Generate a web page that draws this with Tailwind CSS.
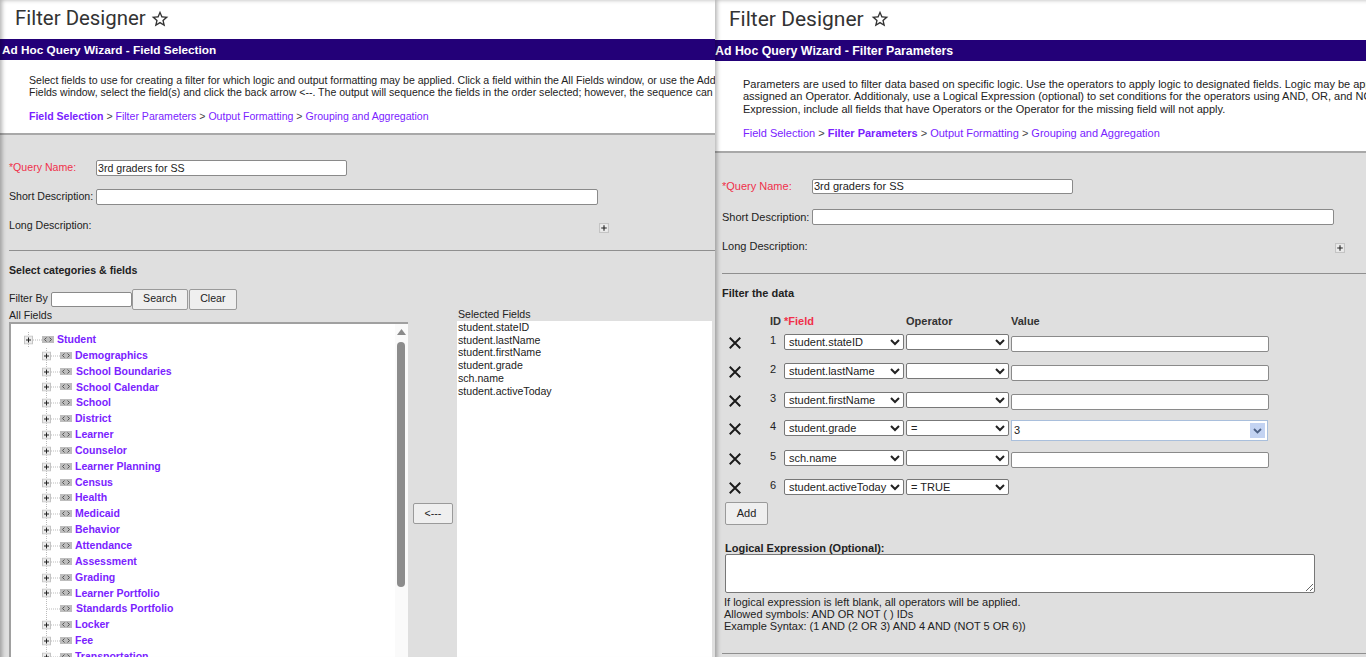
<!DOCTYPE html>
<html>
<head>
<meta charset="utf-8">
<script src="https://cdn.jsdelivr.net/npm/@tailwindcss/browser@4"></script>
</head>
<body class="overflow-hidden bg-white">
<svg width="0" height="0" class="absolute">
  <symbol id="plus" viewBox="0 0 9 9"><rect x=".5" y=".5" width="8" height="8" fill="#ececec" stroke="#c4c4c4"/><path d="M2 4.5h5M4.5 2v5" stroke="#222" stroke-width="1"/></symbol>
  <symbol id="tag" viewBox="0 0 12 7"><rect width="12" height="7" fill="#bdbdbd"/><path d="M4.5 1.5 2.5 3.5 4.5 5.5M7.5 1.5 9.5 3.5 7.5 5.5" fill="none" stroke="#555" stroke-width="1"/></symbol>
  <symbol id="node" viewBox="0 0 32 16"><path d="M4.5 0V16M9 8H18" stroke="#bbb" stroke-dasharray="1 1" fill="none"/><use href="#plus" x="0" y="3.5" width="9" height="9"/><use href="#tag" x="18" y="4" width="12" height="7"/></symbol>
  <symbol id="leaf" viewBox="0 0 32 16"><path d="M4.5 0V16M5 8H18" stroke="#bbb" stroke-dasharray="1 1" fill="none"/><use href="#tag" x="18" y="4" width="12" height="7"/></symbol>
  <symbol id="x" viewBox="0 0 16 16"><path d="M2 2 14 14M14 2 2 14" stroke="#1a1a1a" stroke-width="2.2" fill="none"/></symbol>
</svg>
<div class="flex h-[657px] w-[1366px] overflow-hidden font-['Liberation_Sans',Arial,sans-serif] text-[#222]">

  <!-- LEFT -->
  <section class="relative w-[715px] h-full shrink-0 overflow-hidden flex flex-col">
    <header class="h-[39px] shrink-0 flex items-center pl-[15px] pb-[2px] gap-[4px] bg-white">
      <h1 class="font-['Roboto',sans-serif] text-[20.4px] font-normal text-[#333] leading-none">Filter Designer</h1>
      <svg class="w-[20px] h-[20px]" viewBox="0 0 24 24" fill="#333"><path d="M22 9.24l-7.19-.62L12 2 9.19 8.63 2 9.24l5.46 4.73L5.82 21 12 17.27 18.18 21l-1.63-7.03L22 9.24zM12 15.4l-3.76 2.27 1-4.28-3.32-2.88 4.38-.38L12 6.1l1.71 4.04 4.38.38-3.32 2.88 1 4.28L12 15.4z"/></svg>
    </header>
    <div class="h-[21px] shrink-0 bg-[#230078] text-white font-bold text-[11.8px] leading-[22px] pl-[2px] whitespace-nowrap">Ad Hoc Query Wizard - Field Selection</div>
    <div class="h-[75px] shrink-0 bg-white border-b-2 border-[#a8a8a8] pl-[29px] pt-[14px] text-[10.55px] leading-[12px] whitespace-nowrap">
      <p>Select fields to use for creating a filter for which logic and output formatting may be applied. Click a field within the All Fields window, or use the Add</p>
      <p>Fields window, select the field(s) and click the back arrow &lt;--. The output will sequence the fields in the order selected; however, the sequence can</p>
      <p class="mt-[12px] text-[#7a22ff]"><b>Field Selection</b> <span class="text-[#444]">&gt;</span> Filter Parameters <span class="text-[#444]">&gt;</span> Output Formatting <span class="text-[#444]">&gt;</span> Grouping and Aggregation</p>
    </div>
    <div class="flex-1 bg-[#dfdfdf] text-[10.6px] min-h-0">
      <div class="flex items-center h-[16px] mt-[25px] pl-[9px]"><label class="w-[87px] text-[#f0304a]">*Query Name:</label><input value="3rd graders for SS" class="w-[251px] h-[16px] bg-white border border-[#8a8a8a] rounded-[2px] px-[1px] text-[10.6px]"></div>
      <div class="flex items-center h-[16px] mt-[13px] pl-[9px]"><label class="w-[87px]">Short Description:</label><input class="w-[502px] h-[16px] bg-white border border-[#8a8a8a] rounded-[2px]"></div>
      <div class="flex items-center h-[12px] mt-[15px] pl-[9px]"><label class="w-[590px]">Long Description:</label><svg class="w-[10px] h-[10px] mt-[4px]"><use href="#plus"/></svg></div>
      <div class="mt-[18px] ml-[9px] border-t border-[#8f8f8f]"></div>
      <div class="mt-[13px] pl-[9px] font-bold leading-[12px]">Select categories &amp; fields</div>
      <div class="flex items-center mt-[13px] pl-[9px] h-[20px]">
        <span>Filter By</span>
        <input class="ml-[3px] w-[81px] h-[15px] bg-white border border-[#8a8a8a] rounded-[2px]">
        <button class="w-[56px] h-[21px] bg-[#efefef] border border-[#9a9a9a] rounded-[2px] text-[10.6px]">Search</button>
        <button class="ml-[1px] w-[48px] h-[21px] bg-[#efefef] border border-[#9a9a9a] rounded-[2px] text-[10.6px]">Clear</button>
      </div>
      <div class="flex">
        <div class="w-[448px] ml-[9px] shrink-0">
          <div class="h-[13px] leading-[13px]">All Fields</div>
          <div class="relative w-[399px] h-[400px] bg-white border-l-2 border-t-2 border-[#a0a0a0] pt-[8px] pl-[13px] text-[10.5px] font-bold text-[#7a22ff]">
            <div class="flex items-center h-[15.85px]"><svg class="w-[32px] h-[16px] shrink-0"><use href="#node"/></svg><span class="ml-[1px]">Student</span></div>
            <div class="ml-[18px]">
              <div class="flex items-center h-[15.85px]"><svg class="w-[32px] h-[16px] shrink-0"><use href="#node"/></svg><span class="ml-[1px]">Demographics</span></div>
              <div class="flex items-center h-[15.85px]"><svg class="w-[32px] h-[16px] shrink-0"><use href="#node"/></svg><span class="ml-[2px]">School Boundaries</span></div>
              <div class="flex items-center h-[15.85px]"><svg class="w-[32px] h-[16px] shrink-0"><use href="#node"/></svg><span class="ml-[2px]">School Calendar</span></div>
              <div class="flex items-center h-[15.85px]"><svg class="w-[32px] h-[16px] shrink-0"><use href="#node"/></svg><span class="ml-[2px]">School</span></div>
              <div class="flex items-center h-[15.85px]"><svg class="w-[32px] h-[16px] shrink-0"><use href="#node"/></svg><span class="ml-[1px]">District</span></div>
              <div class="flex items-center h-[15.85px]"><svg class="w-[32px] h-[16px] shrink-0"><use href="#node"/></svg><span class="ml-[1px]">Learner</span></div>
              <div class="flex items-center h-[15.85px]"><svg class="w-[32px] h-[16px] shrink-0"><use href="#node"/></svg><span class="ml-[1px]">Counselor</span></div>
              <div class="flex items-center h-[15.85px]"><svg class="w-[32px] h-[16px] shrink-0"><use href="#node"/></svg><span class="ml-[1px]">Learner Planning</span></div>
              <div class="flex items-center h-[15.85px]"><svg class="w-[32px] h-[16px] shrink-0"><use href="#node"/></svg><span class="ml-[1px]">Census</span></div>
              <div class="flex items-center h-[15.85px]"><svg class="w-[32px] h-[16px] shrink-0"><use href="#node"/></svg><span class="ml-[1px]">Health</span></div>
              <div class="flex items-center h-[15.85px]"><svg class="w-[32px] h-[16px] shrink-0"><use href="#node"/></svg><span class="ml-[1px]">Medicaid</span></div>
              <div class="flex items-center h-[15.85px]"><svg class="w-[32px] h-[16px] shrink-0"><use href="#node"/></svg><span class="ml-[1px]">Behavior</span></div>
              <div class="flex items-center h-[15.85px]"><svg class="w-[32px] h-[16px] shrink-0"><use href="#node"/></svg><span class="ml-[1px]">Attendance</span></div>
              <div class="flex items-center h-[15.85px]"><svg class="w-[32px] h-[16px] shrink-0"><use href="#node"/></svg><span class="ml-[1px]">Assessment</span></div>
              <div class="flex items-center h-[15.85px]"><svg class="w-[32px] h-[16px] shrink-0"><use href="#node"/></svg><span class="ml-[1px]">Grading</span></div>
              <div class="flex items-center h-[15.85px]"><svg class="w-[32px] h-[16px] shrink-0"><use href="#node"/></svg><span class="ml-[1px]">Learner Portfolio</span></div>
              <div class="flex items-center h-[15.85px]"><svg class="w-[32px] h-[16px] shrink-0"><use href="#leaf"/></svg><span class="ml-[2px]">Standards Portfolio</span></div>
              <div class="flex items-center h-[15.85px]"><svg class="w-[32px] h-[16px] shrink-0"><use href="#node"/></svg><span class="ml-[1px]">Locker</span></div>
              <div class="flex items-center h-[15.85px]"><svg class="w-[32px] h-[16px] shrink-0"><use href="#node"/></svg><span class="ml-[1px]">Fee</span></div>
              <div class="flex items-center h-[15.85px]"><svg class="w-[32px] h-[16px] shrink-0"><use href="#node"/></svg><span class="ml-[1px]">Transportation</span></div>
            </div>
            <div class="absolute right-0 top-0 bottom-0 w-[13px] bg-[#fafafa]">
              <svg class="absolute left-[2px] top-[5px] w-[9px] h-[6px]" viewBox="0 0 9 6" fill="#8a8a8a"><path d="M4.5 0 9 6H0z"/></svg>
              <div class="absolute left-[2px] top-[18px] w-[8px] h-[245px] rounded-[4px] bg-[#8c8c8c]"></div>
            </div>
          </div>
        </div>
        <div class="w-[255px] shrink-0 relative">
          <div class="h-[13px] leading-[13px] -mt-[1px] pl-[1px]">Selected Fields</div>
          <div class="h-[400px] mt-[1px] bg-white leading-[12.7px] pl-[1px]">
            <p class="-mt-[1px]">student.stateID</p><p>student.lastName</p><p>student.firstName</p><p>student.grade</p><p>sch.name</p><p>student.activeToday</p>
          </div>
          <button class="absolute left-[-44px] top-[194px] w-[40px] h-[21px] bg-[#efefef] border border-[#9a9a9a] rounded-[2px] text-[10.6px]">&lt;---</button>
        </div>
      </div>
    </div>
    <div class="pointer-events-none absolute inset-0 shadow-[inset_4px_2px_4px_-2px_rgba(0,0,0,0.3)]"></div>
  </section>

  <!-- RIGHT -->
  <section class="relative w-[651px] h-full shrink-0 overflow-hidden flex flex-col">
    <header class="h-[40px] shrink-0 flex items-center pl-[14px] pb-[2px] gap-[6px] bg-white">
      <h1 class="font-['Roboto',sans-serif] text-[21px] font-normal text-[#333] leading-none">Filter Designer</h1>
      <svg class="w-[20px] h-[20px]" viewBox="0 0 24 24" fill="#333"><path d="M22 9.24l-7.19-.62L12 2 9.19 8.63 2 9.24l5.46 4.73L5.82 21 12 17.27 18.18 21l-1.63-7.03L22 9.24zM12 15.4l-3.76 2.27 1-4.28-3.32-2.88 4.38-.38L12 6.1l1.71 4.04 4.38.38-3.32 2.88 1 4.28L12 15.4z"/></svg>
    </header>
    <div class="h-[21px] shrink-0 bg-[#230078] text-white font-bold text-[12.37px] leading-[23px] whitespace-nowrap">Ad Hoc Query Wizard - Filter Parameters</div>
    <div class="h-[92px] shrink-0 bg-white border-b-2 border-[#a8a8a8] pl-[28px] pt-[17px] text-[11px] leading-[12.3px] whitespace-nowrap">
      <p>Parameters are used to filter data based on specific logic. Use the operators to apply logic to designated fields. Logic may be applied to fields that have been</p>
      <p>assigned an Operator. Additionaly, use a Logical Expression (optional) to set conditions for the operators using AND, OR, and NOT. When using a Logical</p>
      <p>Expression, include all fields that have Operators or the Operator for the missing field will not apply.</p>
      <p class="mt-[12px] text-[#7a22ff]">Field Selection <span class="text-[#444]">&gt;</span> <b>Filter Parameters</b> <span class="text-[#444]">&gt;</span> Output Formatting <span class="text-[#444]">&gt;</span> Grouping and Aggregation</p>
    </div>
    <div class="flex-1 bg-[#dfdfdf] text-[11px] min-h-0 pl-[7px]">
      <div class="flex items-center h-[15px] mt-[26px]"><label class="w-[90px] text-[#f0304a]">*Query Name:</label><input value="3rd graders for SS" class="w-[261px] h-[15px] bg-white border border-[#8a8a8a] rounded-[2px] px-[1px] text-[11px]"></div>
      <div class="flex items-center h-[16px] mt-[15px]"><label class="w-[90px]">Short Description:</label><input class="w-[522px] h-[16px] bg-white border border-[#8a8a8a] rounded-[2px]"></div>
      <div class="flex items-center h-[12px] mt-[15px]"><label class="w-[613px]">Long Description:</label><svg class="w-[10px] h-[10px] mt-[4px]"><use href="#plus"/></svg></div>
      <div class="mt-[21px] border-t border-[#8f8f8f]"></div>
      <div class="mt-[13px] font-bold leading-[12px]">Filter the data</div>

      <div class="flex mt-[16px] h-[12px] leading-[12px] font-bold text-[#333]">
        <span class="ml-[48px] w-[14px]">ID</span><span class="w-[122px] text-[#f0304a]">*Field</span><span class="w-[105px]">Operator</span><span>Value</span>
      </div>
      <div class="mt-[7px] ml-[6px]">
        <div class="flex h-[29px]">
          <svg class="w-[14px] h-[14px] mt-[2px]"><use href="#x"/></svg>
          <span class="ml-[28px] w-[14px] leading-[11px] pt-[1px]">1</span>
          <select class="w-[120px] h-[16px] bg-white border border-[#777] rounded-[2px] text-[11px]"><option>student.stateID</option></select>
          <select class="ml-[2px] w-[103px] h-[16px] bg-white border border-[#777] rounded-[2px] text-[11px]"><option></option></select>
          <input class="ml-[2px] mt-[2px] w-[258px] h-[16px] bg-white border border-[#8a8a8a] rounded-[2px]">
        </div>
        <div class="flex h-[29px]">
          <svg class="w-[14px] h-[14px] mt-[2px]"><use href="#x"/></svg>
          <span class="ml-[28px] w-[14px] leading-[11px] pt-[1px]">2</span>
          <select class="w-[120px] h-[16px] bg-white border border-[#777] rounded-[2px] text-[11px]"><option>student.lastName</option></select>
          <select class="ml-[2px] w-[103px] h-[16px] bg-white border border-[#777] rounded-[2px] text-[11px]"><option></option></select>
          <input class="ml-[2px] mt-[2px] w-[258px] h-[16px] bg-white border border-[#8a8a8a] rounded-[2px]">
        </div>
        <div class="flex h-[28px]">
          <svg class="w-[14px] h-[14px] mt-[2px]"><use href="#x"/></svg>
          <span class="ml-[28px] w-[14px] leading-[11px] pt-[1px]">3</span>
          <select class="w-[120px] h-[16px] bg-white border border-[#777] rounded-[2px] text-[11px]"><option>student.firstName</option></select>
          <select class="ml-[2px] w-[103px] h-[16px] bg-white border border-[#777] rounded-[2px] text-[11px]"><option></option></select>
          <input class="ml-[2px] mt-[2px] w-[258px] h-[16px] bg-white border border-[#8a8a8a] rounded-[2px]">
        </div>
        <div class="flex h-[30px]">
          <svg class="w-[14px] h-[14px] mt-[2px]"><use href="#x"/></svg>
          <span class="ml-[28px] w-[14px] leading-[11px] pt-[1px]">4</span>
          <select class="w-[120px] h-[16px] bg-white border border-[#777] rounded-[2px] text-[11px]"><option>student.grade</option></select>
          <select class="ml-[2px] w-[103px] h-[16px] bg-white border border-[#777] rounded-[2px] text-[11px]"><option>=</option></select>
          <div class="ml-[2px] w-[257px] h-[21px] bg-white border border-[#a9bfdc] flex items-center justify-between pl-[2px] pr-[2px]">
            <span>3</span>
            <span class="w-[15px] h-[15px] bg-[#c3d3f2] flex items-center justify-center"><svg class="w-[9px] h-[6px]" viewBox="0 0 9 6"><path d="M1 1 4.5 4.5 8 1" fill="none" stroke="#4d6185" stroke-width="1.8"/></svg></span>
          </div>
        </div>
        <div class="flex h-[29px]">
          <svg class="w-[14px] h-[14px] mt-[2px]"><use href="#x"/></svg>
          <span class="ml-[28px] w-[14px] leading-[11px] pt-[1px]">5</span>
          <select class="w-[120px] h-[16px] bg-white border border-[#777] rounded-[2px] text-[11px]"><option>sch.name</option></select>
          <select class="ml-[2px] w-[103px] h-[16px] bg-white border border-[#777] rounded-[2px] text-[11px]"><option></option></select>
          <input class="ml-[2px] mt-[2px] w-[258px] h-[16px] bg-white border border-[#8a8a8a] rounded-[2px]">
        </div>
        <div class="flex h-[19px]">
          <svg class="w-[14px] h-[14px] mt-[2px]"><use href="#x"/></svg>
          <span class="ml-[28px] w-[14px] leading-[11px] pt-[1px]">6</span>
          <select class="w-[120px] h-[16px] bg-white border border-[#777] rounded-[2px] text-[11px]"><option>student.activeToday</option></select>
          <select class="ml-[2px] w-[103px] h-[16px] bg-white border border-[#777] rounded-[2px] text-[11px]"><option>= TRUE</option></select>
        </div>
      </div>
      <button class="ml-[3px] mt-[4px] block w-[43px] h-[23px] bg-[#efefef] border border-[#9a9a9a] rounded-[2px] text-[11px]">Add</button>
      <div class="mt-[17px] ml-[3px] font-bold leading-[12px]">Logical Expression (Optional):</div>
      <textarea class="block ml-[3px] w-[590px] h-[39px] bg-white border border-[#777] rounded-[2px]"></textarea>
      <div class="ml-[2px] mt-[3px] leading-[12px]">
        <p>If logical expression is left blank, all operators will be applied.</p>
        <p>Allowed symbols: AND OR NOT ( ) IDs</p>
        <p>Example Syntax: (1 AND (2 OR 3) AND 4 AND (NOT 5 OR 6))</p>
      </div>
      <div class="mt-[21px] border-t border-[#8f8f8f]"></div>
    </div>
    <div class="pointer-events-none absolute inset-0 shadow-[inset_4px_2px_4px_-2px_rgba(0,0,0,0.3)]"></div>
  </section>
</div>
</body>
</html>
